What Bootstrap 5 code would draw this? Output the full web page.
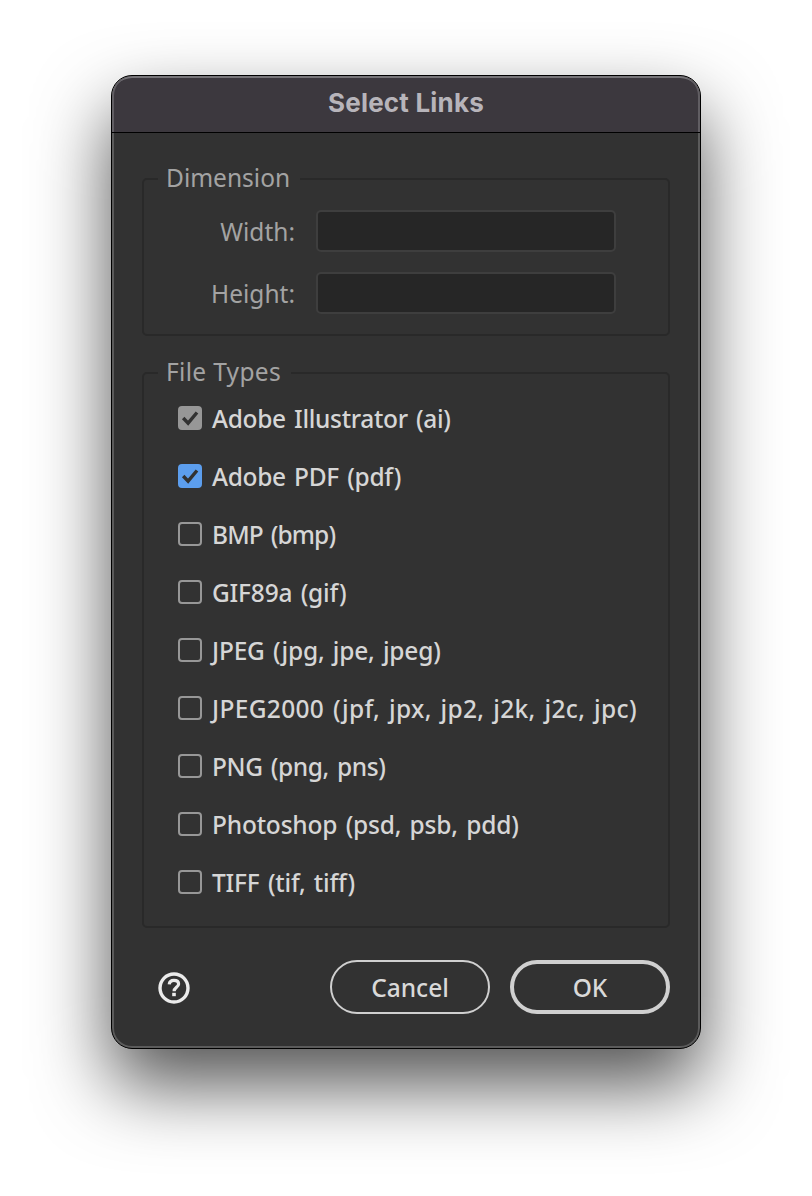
<!DOCTYPE html>
<html lang="en">
<head>
<meta charset="utf-8">
<meta name="viewport" content="width=device-width, initial-scale=1">
<title>Select Links</title>
<link href="https://cdn.jsdelivr.net/npm/bootstrap@5.3.0/dist/css/bootstrap.min.css" rel="stylesheet">
<style>
  body { background: #fff; font-family: "Noto Sans", "Open Sans", sans-serif; font-size: 24.5px; line-height: 32px; }
  .stage { padding: 75px 111px 0; min-height: 100vh; overflow: hidden; }
  .dialog-shade { border-radius: 21px; box-shadow: 0 36px 74px rgba(0,0,0,.68); }
  .dialog-box { width: 590px; height: 974px; background: #323232; border: 1px solid #000; border-radius: 21px; overflow: hidden; box-shadow: inset 0 0 0 2px #5b5b5b; }
  .title-bar { height: 57px; background: #3c383e; border-bottom: 1px solid #000; box-shadow: inset 2px 0 #615e63, inset -2px 0 #615e63, inset 0 2px #777579; border-radius: 20px 20px 0 0; color: #b7b4ba; font: 700 26px/54px Inter, sans-serif; letter-spacing: .2px; }
  .dialog-main { padding: 29px 30px 0; }
  .group-box { border: 2px solid #292929; border-radius: 5px; position: relative; }
  .group-title { position: absolute; top: -18px; left: 14px; padding: 0 10px 0 8px; background: #323232; color: #a3a3a3; }
  .group-size { height: 158px; margin-top: 16px; padding: 30px 52px 0 0; }
  .group-types { height: 556px; margin-top: 36px; padding: 31px 0 0 34px; }
  .group-types .group-title { letter-spacing: .32px; }
  .group-title, .field-row { font-weight: 450; }
  .field-row { height: 42px; margin-bottom: 20px; color: #a3a3a3; }
  .field-row label { padding-top: 2px; }
  .field-row .form-control { width: 300px; height: 42px; background: #262626; border: 2px solid #3e3e3e; border-radius: 5px; margin-left: 21px; }
  .type-row { height: 26px; margin-bottom: 32px; color: #d6d6d6; font-weight: 500; word-spacing: 2.2px; letter-spacing: -.2px; }
  .type-row span { padding-top: 2px; }
  .ls-slim { letter-spacing: -.32px; }
  .ls-slimmer { letter-spacing: -.4px; }
  .ls-tight { letter-spacing: -.85px; }
  .ls-wide { letter-spacing: .33px; }
  .type-row .form-check-input { width: 24px; height: 24px; margin: 0 10px 0 0; background-color: transparent; border: 2px solid #979797; border-radius: 4px; flex: none; }
  .type-row .form-check-input:checked { background-color: #5c9eee; border-color: #5c9eee; background-size: 24px 24px; background-position: -2px -2px; background-image: url("data:image/svg+xml,%3Csvg xmlns='http://www.w3.org/2000/svg' viewBox='0 0 24 24'%3E%3Cpath d='M5.2 12l4.900 5.100 8.900-10.600' fill='none' stroke='%23323232' stroke-width='3.400'/%3E%3C/svg%3E"); }
  .type-row .form-check-input.muted-check:checked { background-color: #979797; border-color: #979797; }
  .footer-row { margin-top: 32px; padding-left: 15px; gap: 20px; }
  .pill { width: 160px; height: 54px; border-radius: 27px; border: 2px solid #d0d0d0; color: #d9d9d9; font-size: 24.5px; font-weight: 500; padding: 2px 0 0; line-height: 48px; }
  .pill-main { border-width: 4px; line-height: 44px; }
</style>
</head>
<body>
<main class="stage">
  <div class="dialog-shade">
    <section class="dialog-box">
      <header class="title-bar text-center">Select Links</header>
      <div class="dialog-main">
        <div class="group-box group-size">
          <div class="group-title">Dimension</div>
          <div class="field-row d-flex align-items-center justify-content-end"><label for="w">Width:</label><input id="w" class="form-control" type="text"></div>
          <div class="field-row d-flex align-items-center justify-content-end"><label for="h">Height:</label><input id="h" class="form-control" type="text"></div>
        </div>
        <div class="group-box group-types">
          <div class="group-title">File Types</div>
          <label class="type-row d-flex align-items-center"><input class="form-check-input muted-check" type="checkbox" checked><span class="ls-slim">Adobe Illustrator (ai)</span></label>
          <label class="type-row d-flex align-items-center"><input class="form-check-input" type="checkbox" checked><span class="ls-slim">Adobe PDF (pdf)</span></label>
          <label class="type-row d-flex align-items-center"><input class="form-check-input" type="checkbox"><span class="ls-tight">BMP (bmp)</span></label>
          <label class="type-row d-flex align-items-center"><input class="form-check-input" type="checkbox"><span>GIF89a (gif)</span></label>
          <label class="type-row d-flex align-items-center"><input class="form-check-input" type="checkbox"><span>JPEG (jpg, jpe, jpeg)</span></label>
          <label class="type-row d-flex align-items-center"><input class="form-check-input" type="checkbox"><span class="ls-wide">JPEG2000 (jpf, jpx, jp2, j2k, j2c, jpc)</span></label>
          <label class="type-row d-flex align-items-center"><input class="form-check-input" type="checkbox"><span class="ls-slimmer">PNG (png, pns)</span></label>
          <label class="type-row d-flex align-items-center"><input class="form-check-input" type="checkbox"><span>Photoshop (psd, psb, pdd)</span></label>
          <label class="type-row d-flex align-items-center"><input class="form-check-input" type="checkbox"><span>TIFF (tif, tiff)</span></label>
        </div>
        <div class="footer-row d-flex align-items-center">
          <svg width="34" height="36" viewBox="0 0 34 36" fill="none" stroke="#ebebeb"><circle cx="17" cy="19" r="14" stroke-width="3.400"/><path d="M12.200 15.400c.3-2.800 2.200-4.100 4.700-4.100 2.800 0 4.700 1.400 4.700 3.700 0 3.200-4.500 3.500-4.500 7.200" stroke-width="3.200"/><path d="M17 23.800v3.400" stroke-width="3.600"/></svg>
          <button class="btn pill ms-auto" type="button">Cancel</button>
          <button class="btn pill pill-main" type="button">OK</button>
        </div>
      </div>
    </section>
  </div>
</main>
<script src="https://cdn.jsdelivr.net/npm/bootstrap@5.3.0/dist/js/bootstrap.bundle.min.js"></script>
</body>
</html>
